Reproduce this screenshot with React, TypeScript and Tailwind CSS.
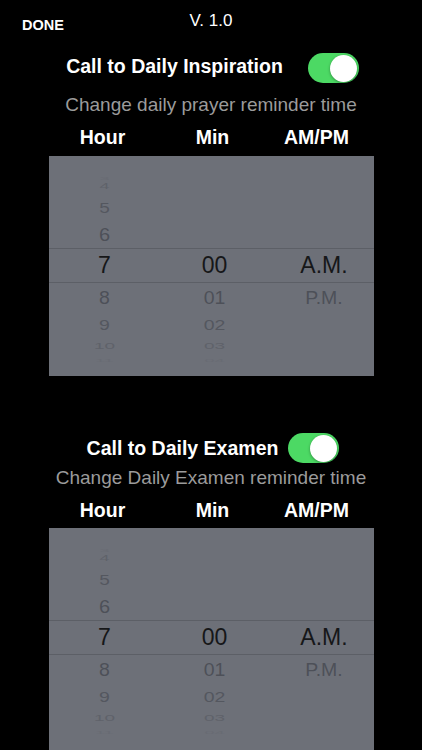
import type { ReactNode } from 'react';

type Row = {
  hour: string;
  min: string;
  ampm: string;
  rowClass: string;
  textClass: string;
};

const rows: Row[] = [
  { hour: '3', min: '', ampm: '', rowClass: 'h-[6px]', textClass: 'text-[18px] scale-y-[0.15] text-[#686b73]' },
  { hour: '4', min: '', ampm: '', rowClass: 'h-[20px]', textClass: 'text-[18px] scale-y-[0.55] text-[#5f626a]' },
  { hour: '5', min: '', ampm: '', rowClass: 'h-[23px]', textClass: 'text-[19px] scale-y-[0.8] text-[#54575f]' },
  { hour: '6', min: '', ampm: '', rowClass: 'h-[29px]', textClass: 'text-[20px] scale-y-[0.95] text-[#4d5058]' },
  {
    hour: '7',
    min: '00',
    ampm: 'A.M.',
    rowClass: 'h-[35px] border-y border-[#5c5f66]',
    textClass: 'text-[23px] text-[#161719]',
  },
  { hour: '8', min: '01', ampm: 'P.M.', rowClass: 'h-[30px]', textClass: 'text-[19.5px] scale-y-[0.95] text-[#4d5058]' },
  { hour: '9', min: '02', ampm: '', rowClass: 'h-[23px]', textClass: 'text-[19.5px] scale-y-[0.78] text-[#54575f]' },
  { hour: '10', min: '03', ampm: '', rowClass: 'h-[16px]', textClass: 'text-[19px] scale-y-[0.5] text-[#5f626a]' },
  { hour: '11', min: '04', ampm: '', rowClass: 'h-[8px]', textClass: 'text-[18px] scale-y-[0.18] text-[#686b73]' },
];

const Toggle = () => (
  <div className="flex h-[30px] w-[51px] shrink-0 items-center justify-end rounded-full bg-[#4cd964] pr-[2px]">
    <div className="h-[27px] w-[27px] rounded-full bg-white shadow-[0_1px_3px_rgba(0,0,0,0.35)]" />
  </div>
);

const Cell = ({ children, textClass }: { children: ReactNode; textClass: string }) => (
  <div className="flex items-center justify-center overflow-visible">
    <span className={`inline-block leading-none ${textClass}`}>{children}</span>
  </div>
);

const Picker = ({ height }: { height: string }) => (
  <div className={`mx-auto w-[325px] overflow-hidden bg-[#6d7078] pt-[14px] ${height}`}>
    {rows.map((row) => (
      <div key={row.hour} className={`grid grid-cols-[112px_108px_105px] box-border ${row.rowClass}`}>
        <Cell textClass={row.textClass}>{row.hour}</Cell>
        <Cell textClass={row.textClass}>{row.min}</Cell>
        <Cell textClass={row.textClass}>
          <span className="pl-[6px]">{row.ampm}</span>
        </Cell>
      </div>
    ))}
  </div>
);

const ColumnHeads = () => (
  <div className="mx-auto grid w-[325px] grid-cols-[112px_108px_105px] text-[19.5px] font-bold leading-[22px] text-white">
    <span className="pr-[4px] text-center">Hour</span>
    <span className="pr-[4px] text-center">Min</span>
    <span className="pr-[9px] text-center">AM/PM</span>
  </div>
);

const App = () => {
  return (
    <div className="h-[750px] w-full overflow-hidden bg-black font-['Liberation_Sans',Arial,sans-serif] text-white">
      <div className="grid h-[40px] grid-cols-3">
        <span className="mt-[17px] pl-[22px] text-[14.5px] font-bold leading-[17px]">DONE</span>
        <span className="mt-[11px] text-center text-[17px] leading-[20px]">V. 1.0</span>
        <span />
      </div>

      <div className="mt-[13px] flex items-center justify-center gap-[25px] pl-[3px]">
        <span className="pb-[4px] text-[19.5px] font-bold leading-[22px]">Call to Daily Inspiration</span>
        <Toggle />
      </div>
      <p className="mt-[11px] text-center text-[19px] leading-[22px] text-[#9b9b9b]">
        Change daily prayer reminder time
      </p>
      <div className="mt-[10px]">
        <ColumnHeads />
      </div>
      <div className="mt-[8px]">
        <Picker height="h-[220px]" />
      </div>

      <div className="mt-[57px] flex items-center justify-center gap-[10px] pl-[4px]">
        <span className="text-[19.5px] font-bold leading-[22px]">Call to Daily Examen</span>
        <Toggle />
      </div>
      <p className="mt-[4px] text-center text-[19px] leading-[22px] text-[#9b9b9b]">
        Change Daily Examen reminder time
      </p>
      <div className="mt-[10px]">
        <ColumnHeads />
      </div>
      <div className="mt-[7px]">
        <Picker height="h-[240px]" />
      </div>
    </div>
  );
};

export default App;
